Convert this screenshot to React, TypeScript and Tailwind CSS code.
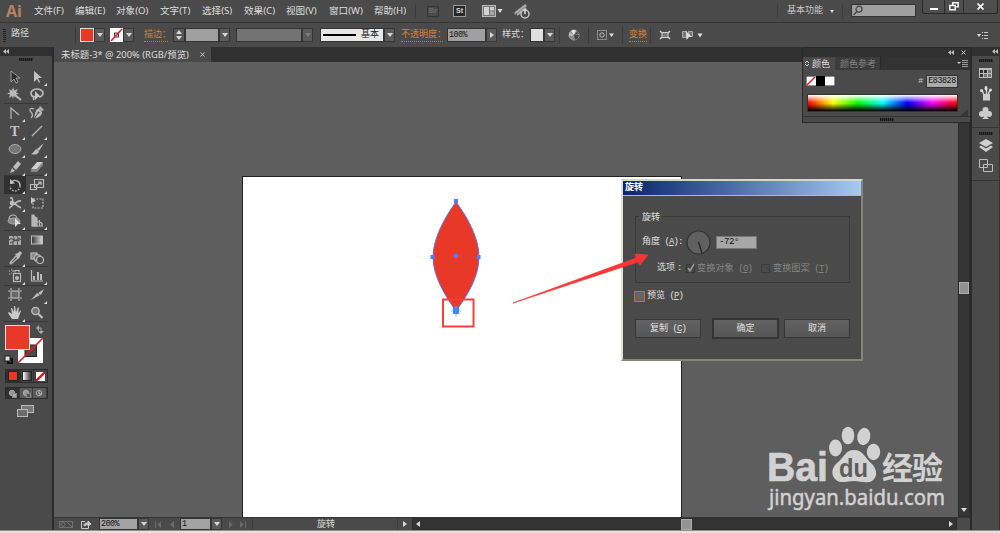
import React from "react";

const menus = [
  { label: "文件(F)", width: "w-[41px]" },
  { label: "编辑(E)", width: "w-[41px]" },
  { label: "对象(O)", width: "w-[44px]" },
  { label: "文字(T)", width: "w-[42px]" },
  { label: "选择(S)", width: "w-[42px]" },
  { label: "效果(C)", width: "w-[42px]" },
  { label: "视图(V)", width: "w-[43px]" },
  { label: "窗口(W)", width: "w-[45px]" },
  { label: "帮助(H)", width: "w-[46px]" },
];

const ui = "font-['Noto_Sans','Noto_Sans_CJK_SC',sans-serif]";
const song = "font-['Liberation_Mono','Noto_Sans_CJK_SC',monospace]";

function Caret({ dir = "down", className = "text-[#d8d8d8]" }: { dir?: "down" | "up" | "left" | "right"; className?: string }) {
  const points = {
    down: "0,1 6,1 3,5",
    up: "0,5 6,5 3,1",
    left: "5,0 5,6 1,3",
    right: "1,0 1,6 5,3",
  };
  return (
    <svg width="6" height="6" viewBox="0 0 6 6" className={`shrink-0 ${className}`}>
      <polygon points={points[dir]} fill="currentColor" />
    </svg>
  );
}

function DropButton({ dir = "down", disabled = false, className = "" }: { dir?: "down" | "right"; disabled?: boolean; className?: string }) {
  return (
    <div className={`flex h-[14px] w-[11px] shrink-0 items-center justify-center border border-[#363636] bg-[#5a5a5a] ${className}`}>
      <Caret dir={dir} className={disabled ? "text-[#7d7d7d]" : "text-[#d6d6d6]"} />
    </div>
  );
}

function Divider({ className = "" }: { className?: string }) {
  return <div className={`w-px shrink-0 bg-[#3b3b3b] ${className}`} />;
}

function Grip({ className = "" }: { className?: string }) {
  return (
    <div className={`flex w-[14px] gap-px bg-[#333] ${className}`}>
      {Array.from({ length: 7 }).map((_, i) => (
        <span key={i} className="h-[3px] w-px bg-[#161616]" />
      ))}
    </div>
  );
}

function Collapse() {
  return (
    <svg width="6" height="5" viewBox="0 0 6 5" fill="#bdbdbd">
      <polygon points="3,0 3,5 0,2.5" />
      <polygon points="6,0 6,5 3,2.5" />
    </svg>
  );
}

// Keyboard hint after a dialog label, e.g. (A)
function Hotkey({ letter }: { letter: string }) {
  return <span className="tracking-[-0.9px] whitespace-pre"> (<u>{letter}</u>)</span>;
}

function MenuBar() {
  return (
    <div className="flex h-[22px] shrink-0 bg-[#4a4a4a]">
      <div className="w-[34px] shrink-0 pl-[6px] font-['Open_Sans',sans-serif] text-[16px] leading-[22px] font-bold text-[#b98264]">Ai</div>
      <nav className={`flex items-center text-[9.6px] whitespace-nowrap text-[#dedede] ${ui}`}>
        {menus.map((menu) => (
          <span key={menu.label} className={`${menu.width} shrink-0`}>{menu.label}</span>
        ))}
      </nav>
      <Divider className="my-[4px] -ml-[5px]" />
      <div className="ml-[11px] flex h-[22px] items-center">
        <span className="flex h-[11px] w-[12px] items-center justify-center border border-[#343434] font-['Liberation_Sans',sans-serif] text-[7px] font-bold text-[#6b6b6b]">Br</span>
        <span className="ml-[14px] flex h-[12px] w-[13px] items-center justify-center border border-[#999] bg-[#272727] font-['Liberation_Sans',sans-serif] text-[7px] font-bold text-[#ddd]">St</span>
        <svg className="ml-[16px]" width="21" height="12" viewBox="0 0 21 12">
          <rect x=".5" y=".5" width="13" height="11" fill="#777" stroke="#bbb" />
          <rect x="2" y="2" width="5" height="8" fill="#d2d2d2" />
          <rect x="8" y="2" width="4" height="3.5" fill="#ccc" />
          <rect x="8" y="6.5" width="4" height="3.5" fill="#aaa" />
          <polygon points="15.5,4 20.500,4 18,8" fill="#e0e0e0" />
        </svg>
        <svg className="ml-[11px]" width="17" height="15" viewBox="0 0 17 15">
          <path d="M0 9 11 0 13 2 9 6 5 11 3 9 1 11Z" fill="#8b8b8b" />
          <path d="M1 9 12 1M3 11 12 4" stroke="#aaa" strokeWidth="1.600" fill="none" />
          <circle cx="11" cy="10" r="4" fill="#4a4a4a" stroke="#c4c4c4" strokeWidth="1.5" />
          <path d="M11 5v5" stroke="#eee" strokeWidth="1.4" />
        </svg>
      </div>
      <div className="ml-auto flex">
        <Divider className="my-[4px]" />
        <div className={`flex w-[64px] items-center pl-[9px] text-[9px] whitespace-nowrap text-[#c8c8c8] ${ui}`}>
          <span className="-mt-[3px]">基本功能</span>
          <svg className="ml-[7px]" width="4" height="3" viewBox="0 0 4 3"><path d="M0 0h4L2 3Z" fill="#ddd" /></svg>
        </div>
        <Divider className="my-[4px]" />
        <div className="mt-[4px] ml-[8px] h-[13px] w-[65px] border border-[#333] bg-[#a0a0a0]">
          <svg width="12" height="11" viewBox="0 0 12 11" fill="none" stroke="#404040" strokeWidth="1.2">
            <circle cx="7" cy="4.2" r="3" />
            <path d="m5 6.5-3.5 3.5" />
          </svg>
        </div>
        <div className="mr-[2px] ml-[6px] flex h-[14px] w-[76px] rounded-b-[3px] border border-t-0 border-[#272727] bg-[#4e4e4e]">
          <span className="flex w-[21px] items-end justify-center pb-[3px]"><i className="h-[2px] w-[8px] bg-white" /></span>
          <span className="flex w-[20px] items-center justify-center border-x border-[#2b2b2b]">
            <svg width="10" height="9" viewBox="0 0 10 9" fill="none" stroke="#f4f4f4" strokeWidth="1.5">
              <path d="M3.7 3V.8h5.5v4H7.2" /><path d="M.8 3.5h5.4v4.2H.8Z" />
            </svg>
          </span>
          <span className="flex flex-1 items-center justify-center">
            <svg width="7" height="7" viewBox="0 0 7 7" stroke="#f4f4f4" strokeWidth="1.7"><path d="m.5.5 6 6m0-6-6 6" /></svg>
          </span>
        </div>
      </div>
    </div>
  );
}

function ControlBar() {
  const link = "border-b border-dotted border-[#c87a2c] leading-[11px] text-[#d8812f]";
  return (
    <div className={`flex h-[25px] shrink-0 items-center border-t border-[#363636] bg-[#4a4a4a] pl-[3px] text-[9px] whitespace-nowrap text-[#dcdcdc] ${song}`}>
      <div className="flex w-[8px] shrink-0 flex-col gap-px">
        {Array.from({ length: 7 }).map((_, i) => <span key={i} className="h-px w-[3px] bg-[#222]" />)}
      </div>
      <span className="w-[64px] shrink-0">路径</span>
      <Divider className="h-[17px]" />
      <div className="ml-[4px] flex w-[30px] shrink-0">
        <div className="h-[14px] w-[14px] border border-[#ddd] bg-[#e83828]" />
        <DropButton />
      </div>
      <div className="flex w-[34px] shrink-0">
        <svg width="13" height="14" viewBox="0 0 13 14">
          <rect width="13" height="14" fill="#fff" />
          <rect x="4.5" y="5" width="4" height="4" fill="#ddd" stroke="#444" />
          <path d="M1 13 12 1" stroke="#e8202a" strokeWidth="1.6" />
        </svg>
        <DropButton />
      </div>
      <span className={`mt-[2px] mr-[5px] w-[24px] shrink-0 ${link}`}>描边：</span>
      <div className="flex h-[14px] w-[12px] shrink-0 flex-col items-center justify-between border border-[#333] bg-[#555]">
        <Caret dir="up" /><Caret />
      </div>
      <div className="h-[14px] w-[34px] shrink-0 border border-[#333] bg-[#9f9f9f]" />
      <DropButton />
      <div className="ml-[6px] h-[14px] w-[66px] shrink-0 border border-[#333] bg-[#737373]" />
      <DropButton disabled />
      <div className="ml-[7px] flex h-[14px] w-[64px] shrink-0 items-center border border-[#333] bg-[#e8e8e8] text-[#222]">
        <i className="ml-[2px] h-[2px] w-[33px] bg-black" />
        <span className="mt-px ml-[5px]">基本</span>
      </div>
      <DropButton />
      <span className={`mt-[2px] ml-[6px] w-[42px] shrink-0 text-[9px] ${link}`}>不透明度：</span>
      <div className="ml-[4px] flex h-[14px] w-[39px] shrink-0 items-center border border-[#333] bg-[#a0a0a0] pl-px text-[8.3px] tracking-[-0.5px] text-[#111]">100%</div>
      <DropButton dir="right" />
      <span className="mt-px ml-[5px] w-[28px] shrink-0">样式：</span>
      <div className="h-[14px] w-[14px] shrink-0 border border-[#333] bg-[#dfdfdf]" />
      <DropButton />
      <Divider className="ml-[4px] h-[17px]" />
      <svg className="ml-[8px] shrink-0" width="12" height="12" viewBox="0 0 12 12">
        <circle cx="6" cy="6" r="5" fill="#8a8a8a" stroke="#999" />
        <path d="M6 6 3 1.8A5 5 0 0 1 8 1.500Z" fill="#e7e7e7" />
        <path d="M6 6 10.7 6A5 5 0 0 1 7 10.8Z" fill="#444" />
        <path d="M6 6 1.4 7.5A5 5 0 0 1 2 3Z" fill="#bbb" />
        <path d="M6 6 9 2A5 5 0 0 1 11 5Z" fill="#555" />
      </svg>
      <Divider className="ml-[8px] h-[17px]" />
      <svg className="ml-[8px] shrink-0" width="18" height="12" viewBox="0 0 18 12">
        <rect x=".5" y="1.5" width="9" height="9" fill="none" stroke="#ccc" strokeDasharray="1 1" />
        <circle cx="5" cy="6" r="2.200" fill="none" stroke="#bbb" />
        <path d="M12 4.5h5L14.5 8Z" fill="#ddd" />
      </svg>
      <Divider className="ml-[7px] h-[17px]" />
      <span className={`mt-[2px] ml-[6px] w-[18px] shrink-0 ${link}`}>变换</span>
      <Divider className="ml-[3px] h-[17px]" />
      <svg className="ml-[8px] shrink-0" width="13" height="10" viewBox="0 0 13 10" fill="none" stroke="#cfcfcf">
        <rect x="3" y="2.5" width="6" height="5" fill="#777" />
        <path d="M1 1l2 2M11 1 9 3M1 9l2-2M11 9 9 7" strokeWidth="1.500" />
      </svg>
      <svg className="ml-[9px] shrink-0" width="23" height="13" viewBox="0 0 23 13">
        <path d="M1.5 2.5h4v6h-4ZM7.5 2.5h4v5h-4Z" fill="#777" stroke="#aaa" />
        <path d="m5 2 6 6H8l-2.5 3Z" fill="#ddd" />
        <path d="M16.500 4.500h5L19 8.500Z" fill="#e0e0e0" />
      </svg>
      <svg className="mr-[11px] ml-auto shrink-0" width="12" height="9" viewBox="0 0 12 9">
        <path d="M0 3h4L2 6Z" fill="#ddd" />
        <path d="M5 1.5h1M7 1.5h4M5 4.5h1M7 4.5h4M5 7.5h1M7 7.5h4" stroke="#c6c6c6" />
      </svg>
    </div>
  );
}

const stroke = { fill: "none", stroke: "#b9b9b9", strokeWidth: 1.2 };

type Tool = { id: string; more?: boolean; active?: boolean; art: React.ReactNode };

const toolGroups: { height: string; tools: Tool[] }[] = [
  {
    height: "h-[36px]",
    tools: [
      { id: "select", art: <path d="M4 2v11l3-3 2 4 2-1-2-4h4Z" fill="#2b2b2b" stroke="#aaa" strokeWidth=".9" /> },
      { id: "direct", more: true, art: <path d="M5 2v11l3-3 2 4 1-1-2-4h4Z" fill="#c4c4c4" /> },
      { id: "wand", art: <g><path d="m7 7 7 6" stroke="#b9b9b9" strokeWidth="2" /><path d="m6 0 1.300 3.500L11 2 9 5.500l3 1-3 1L10 11 6.700 9 6 12 5 9l-3 2 1-3.500-3-1 3-1.300L2 2l3 1.500Z" fill="#b9b9b9" /></g> },
      { id: "lasso", art: <g><path d="M7 10C3 10 2 8 2 6s3-4 6-4 6 2 6 4-2 4-4 4M4 9l1 4" {...stroke} strokeWidth="1.7" /><path d="m6 4 6 6H9l-3 3Z" fill="#c4c4c4" /></g> },
    ],
  },
  {
    height: "h-[72px]",
    tools: [
      { id: "anchor", more: true, art: <path d="M4 14V3l8 7" {...stroke} /> },
      { id: "pen", art: <g><path d="m11 1 4 4-2 1-3-3Z" fill="#bbb" /><path d="m10 3 3 4c0 4-3 5-8 7 1-5 1-9 5-11Z" fill="#bdbdbd" /><path d="m5 14 4-6" stroke="#444" /><circle cx="9.500" cy="7.500" r="1" fill="#444" /><path d="M5 4C1 2 0 5 2 7s2 4 0 6" {...stroke} /></g> },
      { id: "type", more: true, art: <text x="3" y="13" fill="#c5c5c5" fontFamily="Liberation Serif" fontWeight="700" fontSize="14">T</text> },
      { id: "line", more: true, art: <path d="M3 13 13 3" {...stroke} /> },
      { id: "ellipse", more: true, art: <ellipse cx="8" cy="8" rx="6" ry="4.5" fill="#777" stroke="#aaa" /> },
      { id: "brush", more: true, art: <g fill="#bdbdbd"><path d="M8 8 15 2l-5 8Z" /><path d="M8 8 10 11c-2 3-5 3-8 2 3-1 3-4 6-5Z" /></g> },
      { id: "pencil", more: true, art: <g fill="#bdbdbd"><path d="m6 8 5-6 3 3-5 6Z" /><path d="m5 9 3 3-5 2Z" /></g> },
      { id: "eraser", more: true, art: <g><path d="m2 10 6-7h6l-6 7Z" fill="#cfcfcf" /><path d="M2 10h6v3H2ZM8 10l6-7v3l-6 7Z" fill="#888" /></g> },
    ],
  },
  {
    height: "h-[55px]",
    tools: [
      { id: "rotate", more: true, active: true, art: <g><path d="M5 4.500a5 5 0 0 1 8 4.500" {...stroke} strokeWidth="1.400" /><path d="M13 9a5 5 0 0 1-10 0" {...stroke} strokeWidth="1.400" strokeDasharray="1.500 1.500" /><path d="M3 7V2l5 4.500Z" fill="#c4c4c4" /></g> },
      { id: "scale", more: true, art: <g {...stroke}><path d="M5.5 2.5h9v8h-9Z" /><path d="M1.5 7.5h6v5h-6ZM7 9l5-4M9 5h3v3" /></g> },
      { id: "width", more: true, art: <g><path d="M3 3c3-1 3 3 2 5 4 2 5-3 9-2M2 13c2 0 3-4 6-4l6 4" {...stroke} strokeWidth="1.700" /><circle cx="5" cy="8" r="2.300" fill="#bbb" /></g> },
      { id: "free", art: <g><rect x="4" y="4" width="10" height="9" {...stroke} strokeDasharray="2 1.2" /><path d="m2 2 5 4-3 1-2 2Z" fill="#ccc" /></g> },
      { id: "shape", more: true, art: <g><circle cx="6" cy="6" r="4" {...stroke} /><ellipse cx="7" cy="8" rx="6" ry="3" fill="#888" stroke="#aaa" /><path d="m8 5 6 6h-3l-3 3Z" fill="#ddd" /></g> },
      { id: "perspective", more: true, art: <g {...stroke}><path d="M3 2h2v11H3ZM6 4l2 1v8H6Z" fill="#aaa" /><path d="M3 13h11M10.500 7v6M13 10v3M6 8l7 2" /></g> },
    ],
  },
  {
    height: "h-[36px]",
    tools: [
      { id: "mesh", art: <g><rect x="2" y="4" width="12" height="9" fill="#aaa" /><path d="M2 8c4-4 6 4 12-1M6 4c3 4-1 5 0 9M10 4c3 4-1 5 1 9M3 11l10-5" stroke="#444" fill="none" strokeWidth="1" /></g> },
      { id: "gradient", art: <rect x="2.5" y="4" width="11" height="8" fill="url(#toolFade)" stroke="#bbb" /> },
      { id: "eyedropper", more: true, art: <g><path d="M3 13 9 6l2 2-7 6Z" {...stroke} /><path d="m8 4 3-1 2-2 2 2-2 3-1 3Z" fill="#bbb" /></g> },
      { id: "blend", art: <g {...stroke}><rect x="2" y="3" width="6" height="6" fill="#888" /><circle cx="8.5" cy="8" r="3.3" fill="#666" /><circle cx="11" cy="10" r="3.5" fill="#4a4a4a" /></g> },
    ],
  },
  {
    height: "h-[19px]",
    tools: [
      { id: "spray", more: true, art: <g><rect x="6.5" y="5.500" width="7" height="8" {...stroke} /><circle cx="10" cy="10" r="2" fill="#bbb" /><path d="M8 4.500v-2h4v2M2 3h1M4 2h1M2 6h1M4 5h1M5 3h2" {...stroke} /></g> },
      { id: "graph", more: true, art: <g><path d="M2.5 2v11H14" {...stroke} /><path d="M4 8h2v4H4ZM8 4h2v8H8ZM11 6h2v6h-2Z" fill="#bbb" /></g> },
    ],
  },
  {
    height: "h-[36px]",
    tools: [
      { id: "artboard", art: <g {...stroke}><rect x="4" y="4" width="8" height="7" fill="#686868" /><path d="M4 1v2M12 1v2M4 12v2M12 12v2M1 4h2M13 4h2M1 11h2M13 11h2" /></g> },
      { id: "slice", more: true, art: <g fill="#bdbdbd"><path d="M2 13 8 6l3 2Z" /><path d="m9 6 6-4-3 6Z" /></g> },
      { id: "hand", more: true, art: <path d="M5 14 1 8l1-1 3 2L4 3h1l2 4V1h1l1 6 2-5 1 1-1 5 3-3v1l-3 8Z" fill="#c8c8c8" /> },
      { id: "zoom", art: <g><circle cx="6.5" cy="6" r="3.7" fill="#777" stroke="#c0c0c0" strokeWidth="1.3" /><path d="m9.5 9 4 4" stroke="#c0c0c0" strokeWidth="2.2" /></g> },
    ],
  },
];

function Toolbar() {
  return (
    <aside className="flex w-[54px] shrink-0 flex-col border-r-2 border-[#2b2b2b] bg-[#4a4a4a]">
      <div className="flex h-[9px] shrink-0 items-center bg-[#303030] pl-[3px]"><Collapse /></div>
      <div className="flex h-[12px] shrink-0 items-start justify-center pt-[2px]"><Grip /></div>
      {toolGroups.map((group, index) => (
        <div key={index} className={`mx-[4px] flex shrink-0 flex-wrap content-start border-b border-[#373737] ${group.height}`}>
          {group.tools.map((tool) => (
            <div key={tool.id} className={`relative flex h-[18px] w-[22px] items-center justify-center ${tool.active ? "bg-[#303030]" : ""}`}>
              <svg width="16" height="16" viewBox="0 0 16 16">{tool.art}</svg>
              {tool.more && <svg className="absolute right-px bottom-0" width="3" height="3" viewBox="0 0 3 3"><path d="M3 0v3H0Z" fill="#ddd" /></svg>}
            </div>
          ))}
        </div>
      ))}
      <svg className="ml-[4px] shrink-0" width="42" height="43" viewBox="0 0 42 43">
        <defs>
          <linearGradient id="toolFade"><stop stopColor="#333" /><stop offset="1" stopColor="#ddd" /></linearGradient>
        </defs>
        <path d="M14 16h25v25H14ZM21 23v12h12V23Z" fill="#fff" fillRule="evenodd" />
        <rect x="21" y="23" width="11.500" height="11.500" fill="#4a4a4a" stroke="#222" />
        <path d="M14 41 39 16" stroke="#f0151d" strokeWidth="1.6" />
        <rect x="1.5" y="3.5" width="24" height="24" fill="#e83828" stroke="#ddd" />
        <path d="M34 6h3v3" fill="none" stroke="#aaa" />
        <path d="m32 6 3-3v6ZM34 9h6l-3 3Z" fill="#aaa" />
        <rect x="4" y="37" width="4" height="4" fill="none" stroke="#111" strokeWidth="2" />
        <rect x="1" y="34" width="5" height="5" fill="#ddd" stroke="#222" />
      </svg>
      <div className="mt-[4px] ml-[5px] flex h-[14px] w-[43px] shrink-0 border border-[#2b2b2b] bg-[#454545]">
        <div className="flex w-[14px] items-center justify-center bg-[#303030]"><i className="h-[10px] w-[10px] border border-[#222] bg-[#e83828]" /></div>
        <div className="flex w-[14px] items-center justify-center border-x border-[#333]"><i className="h-[10px] w-[10px] border border-[#222] bg-linear-to-r from-white to-[#333]" /></div>
        <svg className="m-auto" width="9" height="9" viewBox="0 0 9 9"><rect width="9" height="9" fill="#fff" /><path d="M0 9 9 0" stroke="#e0151d" strokeWidth="2.3" /></svg>
      </div>
      <div className="mt-[4px] ml-[5px] flex h-[12px] w-[43px] shrink-0 border border-[#2b2b2b] bg-[#5b5b5b]">
        {[0, 1, 2].map((mode) => (
          <div key={mode} className={`flex flex-1 items-center justify-center border-r border-[#3b3b3b] ${mode === 0 ? "bg-[#303030]" : ""}`}>
            <svg width="9" height="9" viewBox="0 0 9 9">
              <circle cx="4" cy="4" r="2.700" fill={mode === 2 ? "#555" : "#999"} stroke="#aaa" />
              {mode === 2 ? <path d="M4 2v3h3" stroke="#ccc" fill="none" /> : <rect x="4.5" y="4.5" width="4" height="4" fill={mode === 0 ? "#aaa" : "#555"} stroke="#888" />}
            </svg>
          </div>
        ))}
      </div>
      <svg className="mt-[6px] ml-[17px] shrink-0" width="17" height="13" viewBox="0 0 17 13">
        <rect x="4.5" y=".5" width="12" height="7" fill="#777" stroke="#bbb" />
        <rect x=".5" y="4.5" width="10" height="7" fill="#6c6c6c" stroke="#bbb" />
      </svg>
    </aside>
  );
}

function Artwork() {
  return (
    <svg className="absolute top-0 left-0" width="904" height="455" viewBox="54 62 904 455">
      <path d="M456 202C465 214 479 236 479 257S466 297 456 311C446 297 433 277 433 257S447 214 456 202Z" fill="#e83828" stroke="#6673dc" />
      <path d="M451 311h10M456 306v11" stroke="#50dff0" />
      <g fill="#4d80ff">
        <rect x="454" y="199" width="4" height="4" /><rect x="454" y="254" width="4" height="4" />
        <rect x="430.500" y="255" width="4" height="4" /><rect x="476.500" y="255" width="4" height="4" />
        <rect x="453" y="308" width="6" height="6" />
      </g>
      <rect x="443" y="299.500" width="30.500" height="27" fill="none" stroke="#fa3e3e" strokeWidth="2" />
    </svg>
  );
}

function Watermark() {
  return (
    <svg className="absolute top-[361px] left-[709px] overflow-visible" width="190" height="92" viewBox="763 423 190 92" fill="#d2d2d2">
      <text x="767" y="481" fontFamily="Liberation Sans" fontWeight="700" fontSize="40" textLength="61" lengthAdjust="spacingAndGlyphs" stroke="#d2d2d2" strokeWidth=".7">Bai</text>
      <ellipse cx="835.500" cy="448" rx="6.500" ry="8.500" />
      <ellipse cx="848" cy="435.500" rx="6.300" ry="8.700" />
      <ellipse cx="863.800" cy="436.500" rx="6.500" ry="8.700" transform="rotate(10 863.8 436.5)" />
      <ellipse cx="873.500" cy="452" rx="6.700" ry="8.300" />
      <path d="M854 450c-9 0-10 8-17 13-6 5-6 13-1 17 5 4 12 1 18 1s12 3 18 0c6-4 5-12 0-17-7-6-9-14-18-14Z" />
      <text x="839" y="477" fill="#5d5d5d" fontFamily="Liberation Sans" fontWeight="700" fontSize="25" textLength="29" lengthAdjust="spacingAndGlyphs">du</text>
      <text x="882" y="479" fontFamily="Noto Sans CJK SC" fontWeight="700" fontSize="31" textLength="61">经验</text>
      <text x="769" y="505" fontFamily="Noto Sans" fontSize="22" textLength="176" lengthAdjust="spacingAndGlyphs" stroke="#d2d2d2" strokeWidth=".5">jingyan.baidu.com</text>
    </svg>
  );
}

function StatusBar() {
  const field = "flex h-[12px] shrink-0 items-center border border-[#333] bg-[#a3a3a3] pl-px text-[8.3px] tracking-[-0.5px] text-[#111]";
  return (
    <div className={`flex h-[13px] shrink-0 items-center border-t border-[#363636] bg-[#4a4a4a] text-[9px] text-[#ddd] ${song}`}>
      <svg className="ml-[5px] shrink-0" width="15" height="9" viewBox="0 0 15 9" fill="none" stroke="#707070">
        <rect x=".5" y="1.500" width="13" height="6" /><circle cx="4" cy="4.500" r="2" /><path d="m8 2 5 5" />
      </svg>
      <svg className="ml-[7px] shrink-0" width="11" height="9" viewBox="0 0 11 9" fill="none" stroke="#ccc">
        <path d="M4 1.500H.500v7h7V6" /><path d="M3 6c0-3 2-3 4-3V1l3 3-3 2V4Z" fill="#ccc" />
      </svg>
      <div className={`ml-[7px] w-[39px] ${field}`}>200%</div>
      <DropButton className="max-h-[12px]" />
      <svg className="ml-[6px] shrink-0" width="21" height="7" viewBox="0 0 21 7" fill="#696969"><path d="M0 0h1v7H0ZM6 0v7L2 3.500ZM19 0v7l-4-3.500Z" /></svg>
      <div className={`ml-[4px] w-[31px] ${field}`}>1</div>
      <DropButton className="max-h-[12px]" />
      <svg className="ml-[6px] shrink-0" width="20" height="7" viewBox="0 0 20 7" fill="#696969"><path d="M1 0v7l4-3.500ZM12 0v7l4-3.500ZM17 0h1v7h-1Z" /></svg>
      <Divider className="ml-[4px] h-full" />
      <span className="mt-[2px] ml-[64px] w-[80px] shrink-0 leading-[10px]">旋转</span>
      <Divider className="h-full" />
      <div className="flex w-[14px] shrink-0 justify-center"><Caret dir="right" /></div>
      <div className="flex h-full flex-1 items-center justify-between border border-[#2c2c2c] bg-[#333] px-[2px]">
        <Caret dir="left" />
        <i className="-mr-[4px] h-[11px] w-[11px] border border-[#aaa] bg-[#939393]" />
        <Caret dir="right" />
      </div>
      <div className="h-full w-[13px] shrink-0" />
    </div>
  );
}

function Workspace() {
  return (
    <main className="flex w-[918px] shrink-0 flex-col border-r-2 border-[#292929]">
      <div className="flex h-[15px] shrink-0 bg-[#303030]">
        <div className={`flex w-[157px] items-center bg-[#4a4a4a] pl-[7px] text-[9.400px] whitespace-nowrap text-[#ddd] ${ui}`}>
          <span className="mt-[2px] w-[130px]">未标题-3* @ 200% (RGB/预览)</span>
          <svg className="mr-[6px] ml-auto shrink-0" width="5" height="5" viewBox="0 0 5 5" stroke="#ccc"><path d="m.5.5 4 4m0-4-4 4" /></svg>
        </div>
      </div>
      <div className="flex min-h-0 flex-1">
        <div className="relative h-full w-[904px] shrink-0 overflow-hidden bg-[#5e5e5e]">
          <div className="mt-[114px] ml-[188px] h-[343px] w-[440px] border border-[#222] bg-white" />
          <Artwork />
          <Watermark />
        </div>
        <div className="flex flex-1 flex-col items-center border border-t-0 border-[#2c2c2c] bg-[#353535]">
          <i className="mt-[220px] h-[12px] w-full border border-[#aaa] bg-[#929292]" />
          <div className="mt-auto mb-[3px]"><Caret /></div>
        </div>
      </div>
      <StatusBar />
    </main>
  );
}

function Dock() {
  return (
    <aside className="flex w-[28px] shrink-0 flex-col border-r border-[#333] bg-[#4a4a4a]">
      <div className="flex h-[9px] items-center justify-end bg-[#303030] pr-px"><Collapse /></div>
      <Grip className="mx-auto mt-[3px]" />
      <div className="flex h-[66px] flex-col items-center border-b border-[#333] pt-[6px]">
        <svg width="13" height="10" viewBox="0 0 13 10"><rect width="13" height="10" fill="#bbb" /><path d="M1 2h3v3H1ZM5 2h3v3H5ZM1 6h3v3H1Z" fill="#333" /><path d="M9 2h3v3H9ZM5 6h3v3H5ZM9 6h3v3H9Z" fill="#777" /></svg>
        <svg className="mt-[8px]" width="12" height="15" viewBox="0 0 12 15"><path d="M3 8h7v6.500H3Z" fill="#ccc" /><path d="M6.500 9V2M4 9 2 4M8 9l2-5" stroke="#ccc" strokeWidth="1.500" /><ellipse cx="6" cy="2.300" rx="1.400" ry="2.300" fill="#ddd" /><circle cx="1.500" cy="4.500" r="1.500" fill="#ddd" /><circle cx="10.500" cy="4" r="1.500" fill="#ddd" /></svg>
        <svg className="mt-[6px]" width="13" height="13" viewBox="0 0 13 13" fill="#ccc"><circle cx="6.500" cy="3" r="3" /><circle cx="3" cy="7" r="3" /><circle cx="10" cy="7" r="3" /><path d="M5 4h3v6l2 2H3l2-2Z" /></svg>
      </div>
      <Grip className="mx-auto mt-[4px]" />
      <div className="flex h-[46px] flex-col items-center border-b border-[#333] pt-[4px]">
        <svg width="14" height="14" viewBox="0 0 14 14" fill="#cfcfcf"><path d="m7 0 7 4-7 4-7-4Z" /><path d="m0 8 2-1.500 5 3 5-3L14 8l-7 5Z" /></svg>
        <svg className="mt-[6px]" width="14" height="14" viewBox="0 0 14 14" fill="#4a4a4a" stroke="#bbb"><path d="M.500.500h8v8h-8ZM4.500 5.500h9v7h-9Z" /></svg>
      </div>
    </aside>
  );
}

function ColorPanel() {
  return (
    <section className="absolute top-[47px] left-[802px] flex h-[76px] w-[169px] flex-col border border-[#292929] bg-[#4a4a4a]">
      <div className="flex h-[9px] shrink-0 items-center justify-end gap-[7px] bg-[#303030] pr-[4px]">
        <Collapse />
        <svg width="5" height="5" viewBox="0 0 5 5" stroke="#ccc"><path d="m.5.5 4 4m0-4-4 4" /></svg>
      </div>
      <div className={`flex h-[13px] shrink-0 bg-[#333] text-[9px] leading-[13px] whitespace-nowrap ${ui}`}>
        <div className="flex w-[32px] items-center bg-[#4a4a4a] pl-[2px] text-[#ddd]">
          <svg className="mr-[3px]" width="4" height="7" viewBox="0 0 4 7" fill="none" stroke="#ccc"><path d="m0 3 2-2 2 2M0 4l2 2 2-2" /></svg>颜色
        </div>
        <div className="w-[46px] border-r border-[#292929] bg-[#3b3b3b] pl-[5px] text-[#858585]">颜色参考</div>
        <svg className="mt-[3px] mr-[2px] ml-auto" width="11" height="7" viewBox="0 0 11 7"><path d="M0 2h4L2 4Z" fill="#ccc" /><path d="M5 .5h6M5 2.500h6M5 4.500h6M5 6.500h6" stroke="#999" /></svg>
      </div>
      <div className="mt-[3px] flex h-[16px] items-center pr-[12px] pl-[3px]">
        <svg width="29" height="10" viewBox="0 0 29 10"><rect width="29" height="10" fill="#fff" stroke="#222" /><path d="M10 0h9v10h-9Z" /><path d="m1 9 8-8" stroke="#f0151d" strokeWidth="1.500" /></svg>
        <span className={`mr-[3px] ml-auto text-[8px] text-[#ccc] ${song}`}>#</span>
        <span className={`flex h-[13px] w-[32px] items-center justify-center border border-[#333] bg-[#aaa] text-[8.3px] tracking-[-0.4px] text-[#111] ${song}`}>E83828</span>
      </div>
      <div className="mt-[5px] ml-[4px] h-[18px] w-[151px] shrink-0 border border-[#333] bg-[linear-gradient(to_bottom,white,transparent_48%,transparent_52%,black),linear-gradient(to_right,red,yellow,lime,cyan,blue,magenta,red)]" />
      <svg className="mt-[-3px] mr-[2px] ml-auto shrink-0" width="8" height="7" viewBox="0 0 8 7"><path d="M8 0v7H0Z" fill="#363636" /></svg>
      <div className="mt-auto flex h-[6px] items-center justify-center border-t border-[#333]"><Grip /></div>
    </section>
  );
}

function RotateDialog() {
  const button = "flex h-[19px] items-center justify-center border border-[#363636] bg-linear-to-b from-[#626262] to-[#565656] pt-[2px]";
  return (
    <section className={`absolute top-[179px] left-[621px] flex h-[182px] w-[242px] flex-col border-2 border-t-[#d6d5ce] border-r-[#85857d] border-b-[#85857d] border-l-[#e1e0d8] bg-[#4a4a4a] text-[9px] whitespace-nowrap text-[#e0e0e0] ${song}`}>
      <header className="h-[15px] shrink-0 border-b border-[#b8b8b0] bg-linear-to-r from-[#0a246a] to-[#a6caf0] pl-[2px] leading-[15px] font-bold text-white">旋转</header>
      <div className="relative mt-[20px] ml-[12px] h-[67px] w-[215px] border border-[#383838] pt-[11px]">
        <span className="absolute -top-[5px] left-[3px] bg-[#4a4a4a] px-[3px] leading-[12px]">旋转</span>
        <div className="flex h-[28px] items-center pl-[6px]">
          <span className="mt-[2px] w-[44px]">角度<Hotkey letter="A" />:</span>
          <svg width="25" height="25" viewBox="0 0 25 25">
            <circle cx="12.500" cy="12.500" r="11.500" fill="#606060" stroke="#303030" strokeWidth="1.200" />
            <path d="m12.500 12 3.500 11" stroke="#222" strokeWidth="1.200" />
          </svg>
          <span className="ml-[5px] h-[13px] w-[41px] border border-[#777] bg-[#a7a7a7] pl-[2px] text-[9px] leading-[11px] tracking-[-0.4px] text-[#111]">-72°</span>
        </div>
        <div className="mt-[5px] flex h-[14px] items-center pl-[21px] text-[#858585]">
          <span className="mt-[2px] w-[29px] text-[#ddd]">选项<span className="ml-[2px]">:</span></span>
          <svg className="-mt-px" width="9" height="10" viewBox="0 0 9 10"><rect x=".5" y="1.500" width="8" height="8" fill="#444" stroke="#393939" /><path d="m2 5 2 3 4-7" fill="none" stroke="#999" strokeWidth="1.600" /></svg>
          <span className="mt-px ml-[2px] w-[64px] text-[9.2px]">变换对象<Hotkey letter="O" /></span>
          <i className="h-[9px] w-[9px] border border-[#3b3b3b]" />
          <span className="mt-px ml-[3px] text-[9.2px]">变换图案<Hotkey letter="T" /></span>
        </div>
      </div>
      <div className="mt-[7px] ml-[11px] flex h-[12px] items-center">
        <i className="h-[11px] w-[11px] border border-[#bd742b] bg-[#646464]" />
        <span className="mt-[2px] ml-[2px]">预览<Hotkey letter="P" /></span>
      </div>
      <div className="mt-[17px] ml-[12px] flex">
        <div className={`w-[66px] ${button}`}><span>复制<Hotkey letter="C" /></span></div>
        <div className={`ml-[12px] w-[65px] outline outline-[#333] ${button}`}>确定</div>
        <div className={`ml-[6px] w-[66px] ${button}`}>取消</div>
      </div>
    </section>
  );
}

export default function App() {
  return (
    <div className="relative flex h-[533px] w-[1000px] flex-col overflow-hidden bg-[#4a4a4a]">
      <MenuBar />
      <ControlBar />
      <div className="flex h-[483px] shrink-0">
        <Toolbar />
        <Workspace />
        <Dock />
      </div>
      <div className="h-[3px] shrink-0 border-t border-[#8f8f88] bg-[#e2e2d9]" />
      <ColorPanel />
      <RotateDialog />
      <svg className="absolute top-[250px] left-[510px]" width="142" height="56" viewBox="510 250 142 56">
        <path d="M513 303 636 258 635 254 648 255 640 265 638 262Z" fill="#fa3535" stroke="#fa3535" strokeWidth=".7" />
      </svg>
    </div>
  );
}
